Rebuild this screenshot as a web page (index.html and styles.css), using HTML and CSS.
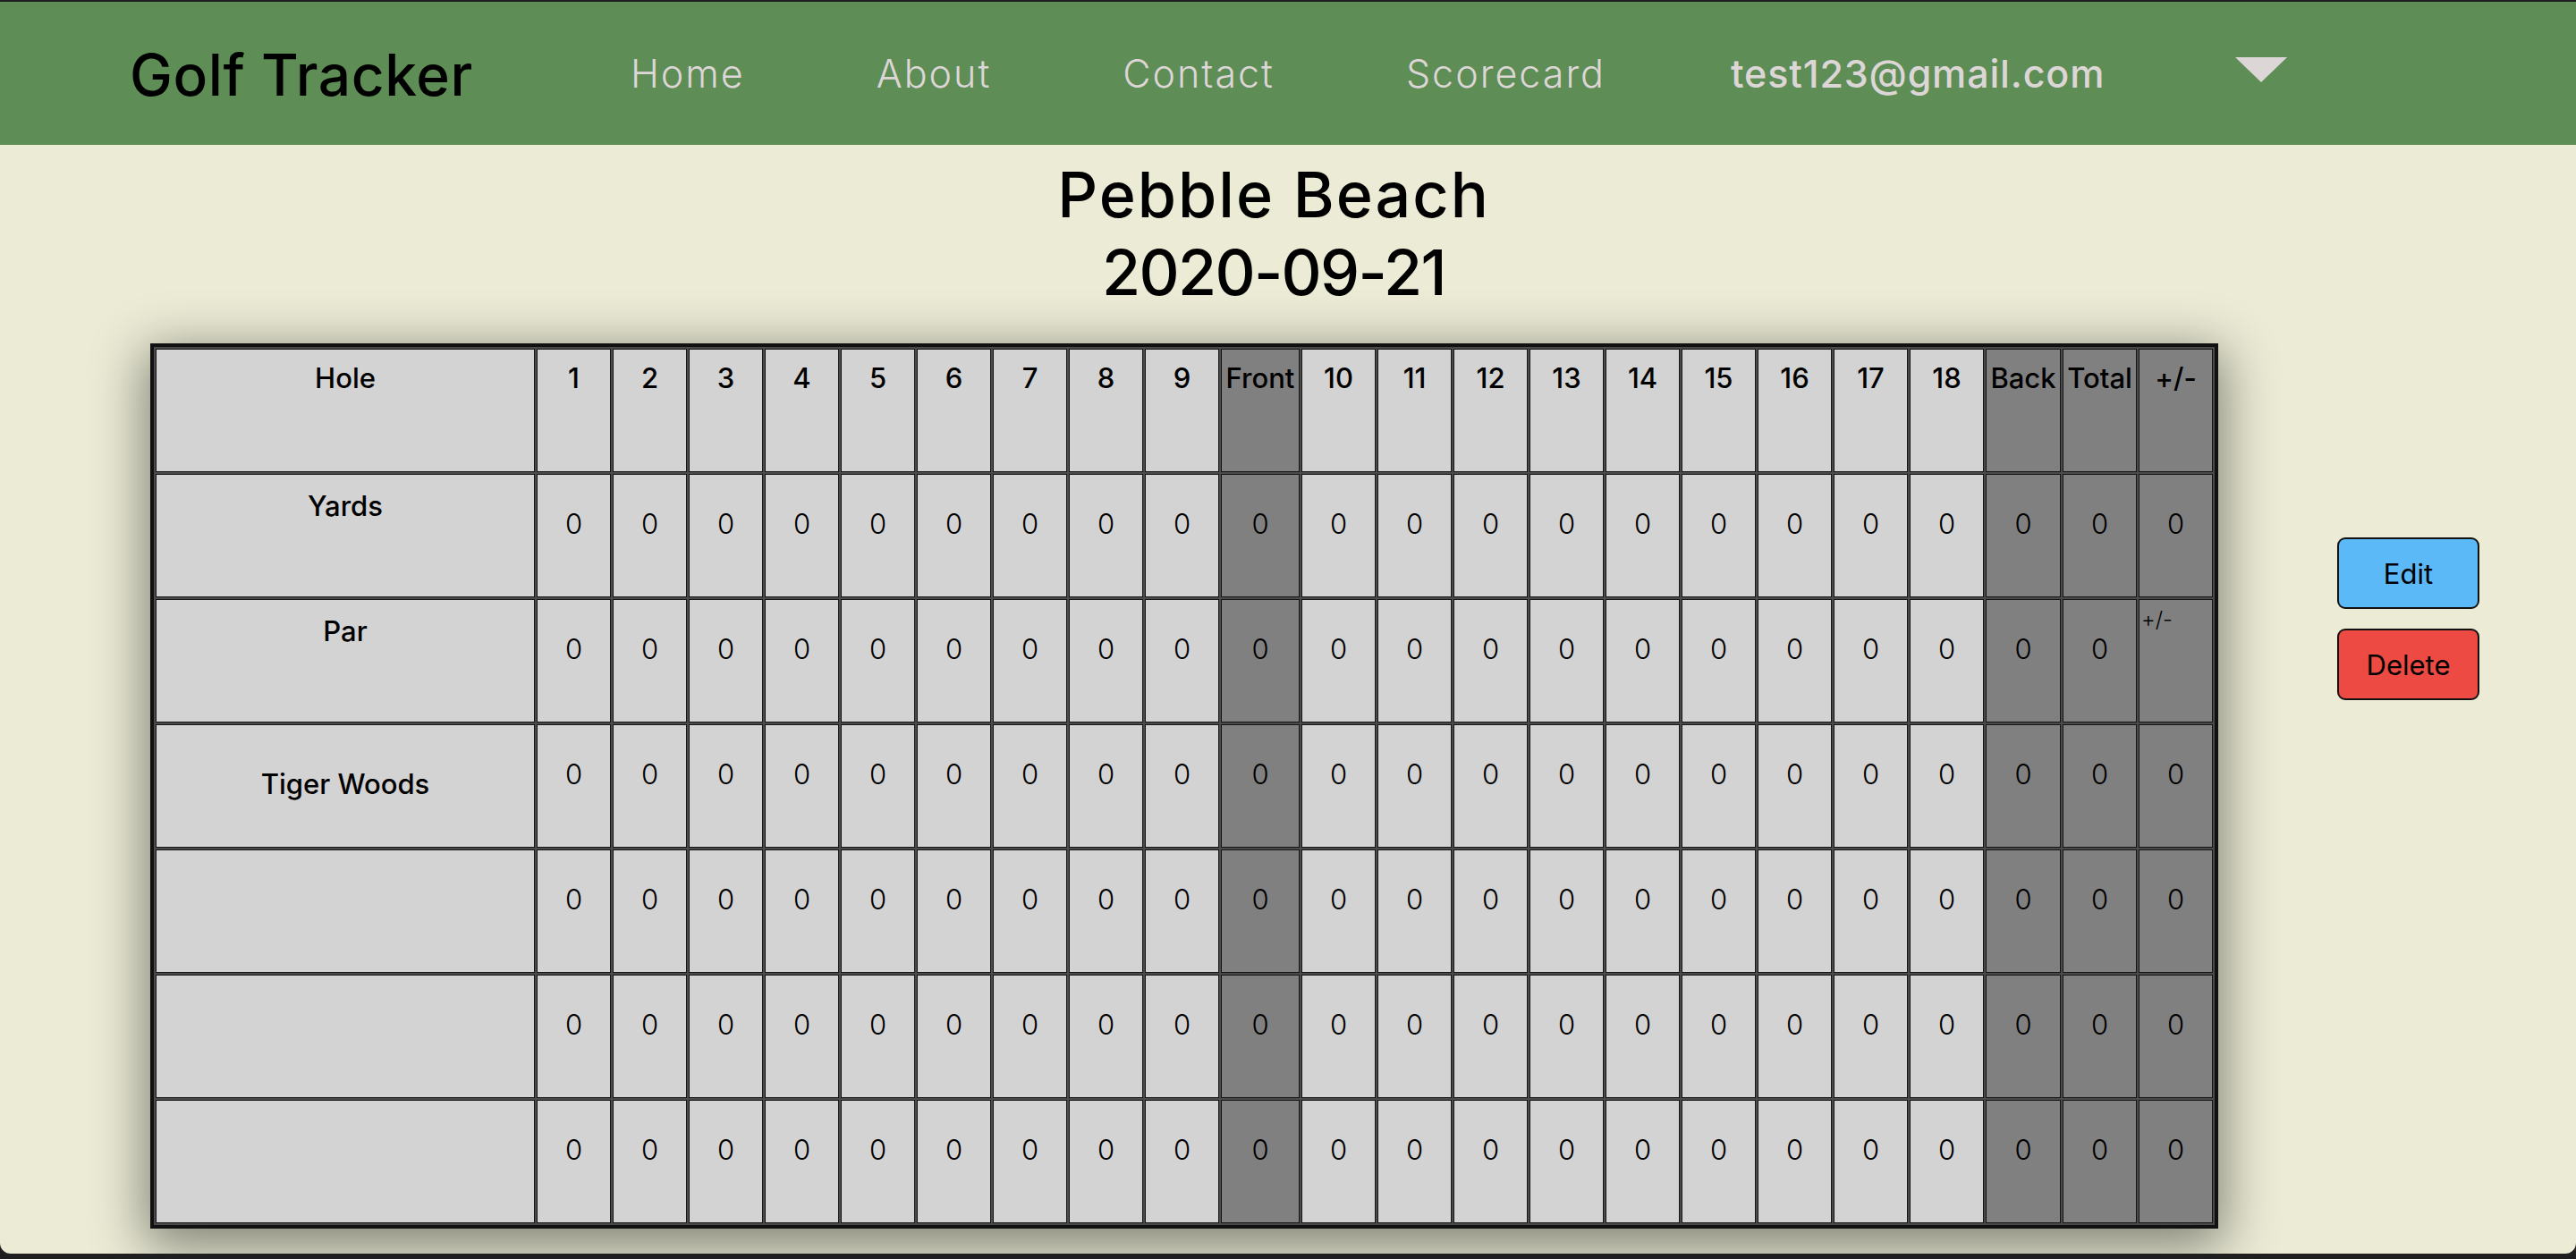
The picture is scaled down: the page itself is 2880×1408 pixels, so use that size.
FILE: index.html
```html
<!DOCTYPE html>
<html lang="en">
<head>
<meta charset="utf-8">
<title>Golf Tracker – Pebble Beach</title>
<link rel="stylesheet" href="styles.css">
</head>
<body>
<div class="window">
  <nav class="topbar">
    <div class="brand">Golf Tracker</div>
    <ul class="links">
      <li><a href="#">Home</a></li>
      <li><a href="#">About</a></li>
      <li><a href="#">Contact</a></li>
      <li><a href="#">Scorecard</a></li>
    </ul>
    <div class="user">test123@gmail.com</div>
    <svg class="caret" width="58" height="28" viewBox="0 0 58 28" aria-hidden="true"><polygon points="0,0 58,0 29,28" fill="#ddd6d6"/></svg>
  </nav>

  <main class="page">
    <h1 class="title"><span class="course">Pebble Beach</span><span class="date">2020-09-21</span></h1>

    <div class="board">
      <table class="scorecard">
        <colgroup>
          <col class="c-name">
          <col class="c-hole"><col class="c-hole"><col class="c-hole"><col class="c-hole"><col class="c-hole"><col class="c-hole"><col class="c-hole"><col class="c-hole"><col class="c-hole">
          <col class="c-front">
          <col class="c-hole"><col class="c-hole"><col class="c-hole"><col class="c-hole"><col class="c-hole"><col class="c-hole"><col class="c-hole"><col class="c-hole"><col class="c-hole">
          <col class="c-back"><col class="c-total"><col class="c-pm">
        </colgroup>
        <tr class="head">
          <th>Hole</th>
          <th>1</th><th>2</th><th>3</th><th>4</th><th>5</th><th>6</th><th>7</th><th>8</th><th>9</th>
          <th class="sum">Front</th>
          <th>10</th><th>11</th><th>12</th><th>13</th><th>14</th><th>15</th><th>16</th><th>17</th><th>18</th>
          <th class="sum">Back</th><th class="sum">Total</th><th class="sum">+/-</th>
        </tr>
        <tr>
          <td class="label">Yards</td>
          <td>0</td><td>0</td><td>0</td><td>0</td><td>0</td><td>0</td><td>0</td><td>0</td><td>0</td>
          <td class="sum">0</td>
          <td>0</td><td>0</td><td>0</td><td>0</td><td>0</td><td>0</td><td>0</td><td>0</td><td>0</td>
          <td class="sum">0</td><td class="sum">0</td><td class="sum">0</td>
        </tr>
        <tr>
          <td class="label">Par</td>
          <td>0</td><td>0</td><td>0</td><td>0</td><td>0</td><td>0</td><td>0</td><td>0</td><td>0</td>
          <td class="sum">0</td>
          <td>0</td><td>0</td><td>0</td><td>0</td><td>0</td><td>0</td><td>0</td><td>0</td><td>0</td>
          <td class="sum">0</td><td class="sum">0</td><td class="sum hint-cell"><span class="hint">+/-</span></td>
        </tr>
        <tr>
          <td class="label player">Tiger Woods</td>
          <td>0</td><td>0</td><td>0</td><td>0</td><td>0</td><td>0</td><td>0</td><td>0</td><td>0</td>
          <td class="sum">0</td>
          <td>0</td><td>0</td><td>0</td><td>0</td><td>0</td><td>0</td><td>0</td><td>0</td><td>0</td>
          <td class="sum">0</td><td class="sum">0</td><td class="sum">0</td>
        </tr>
        <tr>
          <td class="label"></td>
          <td>0</td><td>0</td><td>0</td><td>0</td><td>0</td><td>0</td><td>0</td><td>0</td><td>0</td>
          <td class="sum">0</td>
          <td>0</td><td>0</td><td>0</td><td>0</td><td>0</td><td>0</td><td>0</td><td>0</td><td>0</td>
          <td class="sum">0</td><td class="sum">0</td><td class="sum">0</td>
        </tr>
        <tr>
          <td class="label"></td>
          <td>0</td><td>0</td><td>0</td><td>0</td><td>0</td><td>0</td><td>0</td><td>0</td><td>0</td>
          <td class="sum">0</td>
          <td>0</td><td>0</td><td>0</td><td>0</td><td>0</td><td>0</td><td>0</td><td>0</td><td>0</td>
          <td class="sum">0</td><td class="sum">0</td><td class="sum">0</td>
        </tr>
        <tr>
          <td class="label"></td>
          <td>0</td><td>0</td><td>0</td><td>0</td><td>0</td><td>0</td><td>0</td><td>0</td><td>0</td>
          <td class="sum">0</td>
          <td>0</td><td>0</td><td>0</td><td>0</td><td>0</td><td>0</td><td>0</td><td>0</td><td>0</td>
          <td class="sum">0</td><td class="sum">0</td><td class="sum">0</td>
        </tr>
      </table>

      <div class="actions">
        <button class="btn btn-edit" type="button">Edit</button>
        <button class="btn btn-delete" type="button">Delete</button>
      </div>
    </div>
  </main>
</div>
</body>
</html>
```

FILE: styles.css
```css
* {
  box-sizing: border-box;
}

html, body {
  margin: 0;
  padding: 0;
  background: #1f1f1f;
}

body {
  font-family: Inter, "Open Sans", "Liberation Sans", sans-serif;
  color: #000;
}

.window {
  margin-top: 2px;
  height: 1400px;
  background: #ebebd6;
  border-radius: 0 0 12px 12px;
  overflow: hidden;
}

/* ---------- top bar ---------- */
.topbar {
  height: 160px;
  background: #5e8d56;
  display: flex;
  align-items: center;
  padding-left: 145px;
}

.brand {
  font-size: 64px;
  line-height: 64px;
  font-weight: 500;
  letter-spacing: 0.6px;
  width: 560px;
  flex: none;
  margin-top: 4px;
}

.links {
  list-style: none;
  margin: 0;
  padding: 0;
  display: flex;
  gap: 147px;
}

.links a {
  display: block;
  color: #ddd6d6;
  text-decoration: none;
  font-size: 43px;
  line-height: 43px;
  font-weight: 300;
  letter-spacing: 2px;
}

.user {
  margin-left: 140px;
  color: #ddd6d6;
  font-size: 43px;
  line-height: 43px;
  font-weight: 500;
  letter-spacing: 0.85px;
}

.caret {
  margin-left: 146px;
  margin-bottom: 8px;
  display: block;
}

/* ---------- page ---------- */
.page {
  padding-top: 12px;
}

.title {
  margin: 0;
  padding-right: 32px;
  text-align: center;
  font-size: 70px;
  line-height: 87px;
  font-weight: 500;
}

.title span {
  display: block;
}

.title .course {
  letter-spacing: 2px;
}

.title .date {
  letter-spacing: -1.7px;
}

.board {
  display: flex;
  align-items: flex-start;
  margin-top: 36px;
  padding-left: 168px;
}

/* ---------- scorecard table ---------- */
.scorecard {
  table-layout: fixed;
  width: 2312px;
  border-collapse: separate;
  border-spacing: 2px;
  border: 4px solid #111;
  background: #4a4a4a;
  box-shadow: 0 14px 55px 6px rgba(0, 0, 0, 0.45);
  flex: none;
}

.c-name { width: 424px; }
.c-hole { width: 83px; }
.c-front { width: 88px; }
.c-back { width: 84px; }
.c-total { width: 83px; }
.c-pm { width: 83px; }

.scorecard th,
.scorecard td {
  height: 138px;
  border: 1px solid #161616;
  background: #d3d3d3;
  text-align: center;
  vertical-align: top;
  font-size: 31px;
  line-height: 38px;
  padding: 0;
  white-space: nowrap;
  overflow: visible;
}

.scorecard th {
  font-weight: 500;
  padding-top: 13px;
}

.scorecard td {
  font-weight: 300;
  padding-top: 36px;
}

.scorecard td.label {
  font-weight: 500;
  padding-top: 16px;
}

.scorecard td.player {
  vertical-align: middle;
  padding-top: 0;
  padding-bottom: 4px;
}

.scorecard .sum {
  background: #808080;
}

.scorecard td.hint-cell {
  text-align: left;
  padding: 0 0 0 2px;
}

.hint {
  font-size: 24px;
  line-height: 24px;
  font-weight: 300;
}

/* ---------- actions ---------- */
.actions {
  display: flex;
  flex-direction: column;
  gap: 22px;
  margin-left: 133px;
  margin-top: 217px;
}

.btn {
  width: 159px;
  height: 80px;
  border: 2px solid #111;
  border-radius: 9px;
  font-family: Inter, "Open Sans", sans-serif;
  font-size: 31px;
  font-weight: 400;
  color: #000;
  padding: 0;
  cursor: pointer;
}

.btn-edit {
  background: #5bb9f8;
}

.btn-delete {
  background: #ec4a42;
}
```
